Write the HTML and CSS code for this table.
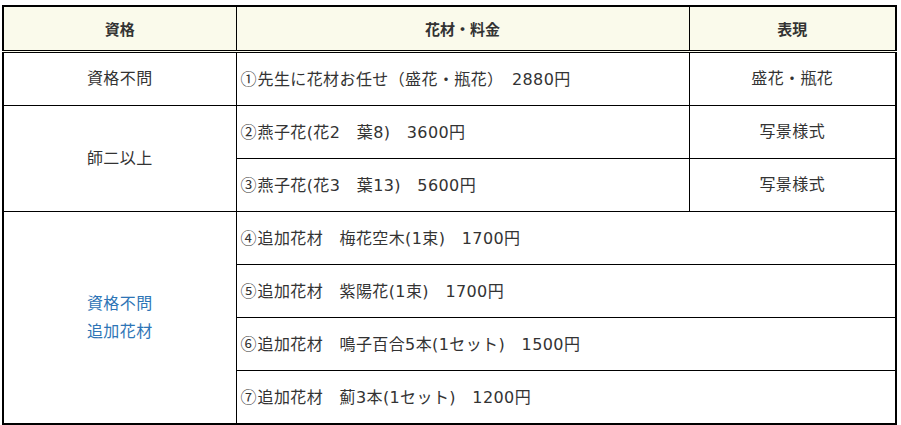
FILE: index.html
```html
<!DOCTYPE html>
<html lang="ja">
<head>
<meta charset="utf-8">
<link rel="stylesheet" href="styles.css">
</head>
<body>
<div class="wrap">
<table class="price">
  <colgroup>
    <col class="c1"><col class="c2"><col class="c3">
  </colgroup>
  <thead>
    <tr><th>資格</th><th>花材・料金</th><th>表現</th></tr>
  </thead>
  <tbody>
    <tr>
      <td class="center">資格不問</td>
      <td><span class="mark">①</span>先生に花材お任せ（盛花・瓶花）　2880円</td>
      <td class="center">盛花・瓶花</td>
    </tr>
    <tr>
      <td class="center" rowspan="2">師二以上</td>
      <td><span class="mark">②</span>燕子花(花2　葉8)　3600円</td>
      <td class="center">写景様式</td>
    </tr>
    <tr>
      <td><span class="mark">③</span>燕子花(花3　葉13)　5600円</td>
      <td class="center">写景様式</td>
    </tr>
    <tr>
      <td class="center blue" rowspan="4"><p>資格不問</p><p>追加花材</p></td>
      <td colspan="2"><span class="mark">④</span>追加花材　梅花空木(1束)　1700円</td>
    </tr>
    <tr><td colspan="2"><span class="mark">⑤</span>追加花材　紫陽花(1束)　1700円</td></tr>
    <tr><td colspan="2"><span class="mark">⑥</span>追加花材　鳴子百合5本(1セット)　1500円</td></tr>
    <tr><td colspan="2"><span class="mark">⑦</span>追加花材　薊3本(1セット)　1200円</td></tr>
  </tbody>
</table>
</div>
</body>
</html>
```

FILE: styles.css
```css
html, body {
  margin: 0;
  padding: 0;
  background: #fff;
}
.wrap {
  padding: 5px 0 0 2px;
}
.price {
  width: 893px;
  border-collapse: collapse;
  border: 2px solid #000;
  font-family: "DejaVu Sans", "Noto Sans CJK JP", sans-serif;
  font-size: 16px;
  color: #333;
  table-layout: fixed;
}
.c1 { width: 233px; }
.c2 { width: 453px; }
.c3 { width: 207px; }
.price th {
  background: #fafaeb;
  font-weight: bold;
  height: 43px;
  padding: 0;
  font-size: 15px;
  text-align: center;
  border-left: 1px solid #000;
  border-right: 1px solid #000;
  border-bottom: 3px double #000;
}
.price td {
  border: 1px solid #000;
  height: 52px;
  padding: 0 4px;
  vertical-align: middle;
  line-height: 20px;
  letter-spacing: 0.4px;
}
.price td.center { text-align: center; }
.price td.blue { color: #2e75b6; }
.price td.blue p { margin: 0; line-height: 28px; }
.mark {
  font-family: "Noto Sans CJK JP", sans-serif;
  letter-spacing: 1px;
}
```
